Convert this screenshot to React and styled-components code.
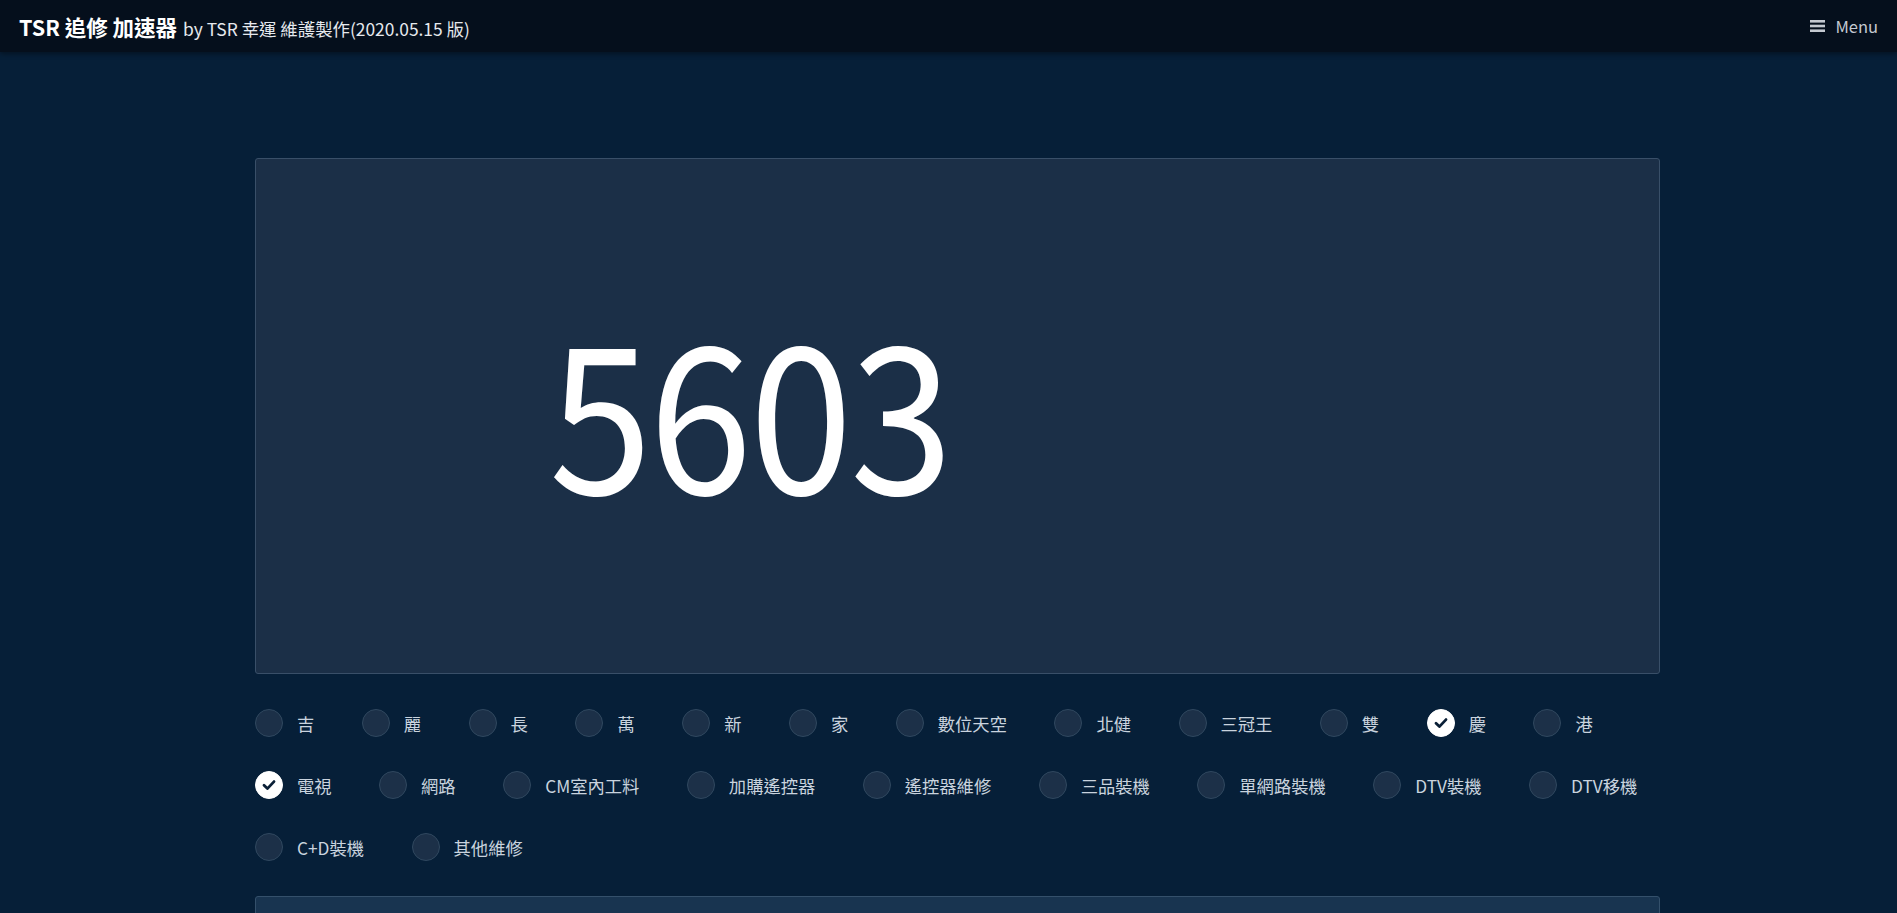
import React, { useState } from "react";
import styled, { createGlobalStyle } from "styled-components";

const Global = createGlobalStyle`
  html, body { margin: 0; padding: 0; }
  body {
    background: #061f38;
    font-family: "Noto Sans CJK TC", "Noto Sans", sans-serif;
    color: #c9d3de;
    min-height: 913px;
    overflow: hidden;
  }
`;

const Header = styled.header`
  height: 52px;
  background: #050f1c;
  box-shadow: 0 2px 5px rgba(0, 0, 0, 0.4);
  display: flex;
  align-items: center;
  justify-content: space-between;
  padding: 0 19px;
  position: relative;
  z-index: 1;
`;

const Brand = styled.div`
  display: flex;
  align-items: baseline;
  gap: 6px;
  white-space: nowrap;
`;

const Title = styled.span`
  font-size: 21.5px;
  font-weight: 700;
  color: #ffffff;
`;

const Sub = styled.span`
  font-size: 17.4px;
  color: #e6e9ee;
`;

const MenuButton = styled.button`
  background: none;
  border: 0;
  padding: 0;
  display: flex;
  align-items: center;
  gap: 10px;
  color: #c4c9d0;
  font-family: inherit;
  font-size: 16.5px;
  cursor: pointer;
`;

const Main = styled.main`
  padding: 106px 0 0 255px;
`;

const Container = styled.div`
  width: 1405px;
`;

const Display = styled.div`
  height: 514px;
  background: #1b2f47;
  border: 1px solid #394f68;
  border-radius: 3px;
  display: flex;
  align-items: center;
  padding-left: 293px;
`;

const Number = styled.div`
  font-size: 204px;
  line-height: 1;
  color: #ffffff;
  font-weight: 400;
  letter-spacing: -3px;
  margin-bottom: 22px;
  transform: scaleX(0.91);
  transform-origin: left center;
`;

const Options = styled.div`
  display: flex;
  flex-wrap: wrap;
  column-gap: 47.5px;
  row-gap: 34px;
  margin-top: 35px;
`;

const Option = styled.label`
  display: flex;
  align-items: center;
  gap: 14px;
  cursor: pointer;
  height: 28px;
`;

const Circle = styled.span`
  width: 28px;
  height: 28px;
  box-sizing: border-box;
  border-radius: 50%;
  flex: none;
  display: flex;
  align-items: center;
  justify-content: center;
  background: ${(p) => (p.$on ? "#ffffff" : "#1c3048")};
  border: 1px solid ${(p) => (p.$on ? "#ffffff" : "#30485f")};
`;

const Label = styled.span`
  font-size: 17.3px;
  color: #c9d3de;
  white-space: nowrap;
`;

const Lower = styled.div`
  margin-top: 35px;
  height: 80px;
  background: #183450;
  border: 1px solid #34506b;
  border-radius: 3px;
`;

const Check = () => (
  <svg width="16" height="16" viewBox="0 0 16 16">
    <path d="M3 8.3 L6.4 11.6 L13 4.6" fill="none" stroke="#0a1f36" strokeWidth="2.8" strokeLinecap="round" strokeLinejoin="round" />
  </svg>
);

const Bars = () => (
  <svg width="15" height="12" viewBox="0 0 15 12">
    <rect x="0" y="0" width="15" height="2.6" fill="currentColor" />
    <rect x="0" y="4.7" width="15" height="2.6" fill="currentColor" />
    <rect x="0" y="9.4" width="15" height="2.6" fill="currentColor" />
  </svg>
);

const ITEMS = [
  "吉", "麗", "長", "萬", "新", "家", "數位天空", "北健", "三冠王", "雙", "慶", "港",
  "電視", "網路", "CM室內工料", "加購遙控器", "遙控器維修", "三品裝機", "單網路裝機", "DTV裝機", "DTV移機",
  "C+D裝機", "其他維修",
];

export default function App() {
  const [sel, setSel] = useState({ 慶: true, 電視: true });
  return (
    <>
      <Global />
      <Header>
        <Brand>
          <Title>TSR 追修 加速器</Title>
          <Sub>by TSR 幸運 維護製作(2020.05.15 版)</Sub>
        </Brand>
        <MenuButton>
          <Bars />
          Menu
        </MenuButton>
      </Header>
      <Main>
        <Container>
          <Display>
            <Number>5603</Number>
          </Display>
          <Options>
            {ITEMS.map((t) => (
              <Option key={t} onClick={() => setSel((s) => ({ ...s, [t]: !s[t] }))}>
                <Circle $on={!!sel[t]}>{sel[t] && <Check />}</Circle>
                <Label>{t}</Label>
              </Option>
            ))}
          </Options>
          <Lower />
        </Container>
      </Main>
    </>
  );
}
